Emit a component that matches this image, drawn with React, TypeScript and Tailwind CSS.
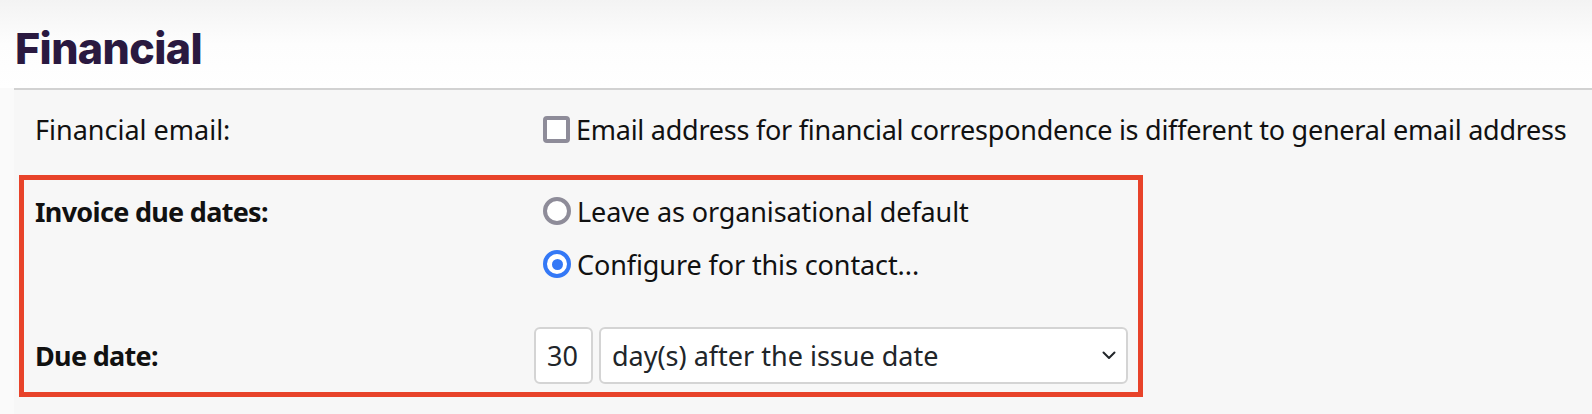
import React from "react";

const body = { fontFamily: '"Noto Sans", "Open Sans", sans-serif' };

function Radio({ checked }: { checked?: boolean }) {
  return checked ? (
    <span className="box-border flex h-[28px] w-[28px] shrink-0 items-center justify-center rounded-full border-[4px] border-[#3478f6] bg-white">
      <span className="h-[11px] w-[11px] rounded-full bg-[#3478f6]" />
    </span>
  ) : (
    <span className="box-border h-[28px] w-[28px] shrink-0 rounded-full border-[4px] border-[#8e8c99] bg-white" />
  );
}

export default function App() {
  return (
    <div className="min-h-[414px] w-[1592px] bg-[#fafafa] text-[#111111]" style={body}>
      <div className="flex h-[88px] items-start bg-gradient-to-b from-[#f3f3f3] via-[#fdfdfd] to-white pl-[15px] pt-[22px]">
        <h1
          className="text-[43px] font-extrabold leading-[52px] tracking-[-0.6px] text-[#2a1940]"
          style={{ fontFamily: 'Inter, Lato, "Noto Sans", sans-serif' }}
        >
          Financial
        </h1>
      </div>
      <div className="ml-[14px] min-h-[326px] border-t-2 border-[#d2d2d2] bg-[#f7f7f7] text-[27px] leading-none">
        <div className="flex h-[79px] items-center pl-[21px]">
          <div className="w-[508px]">Financial email:</div>
          <div className="flex items-center gap-[6px]">
            <span className="box-border h-[27px] w-[27px] rounded-[4px] border-[4px] border-[#8e8c99] bg-white" />
            <span className="tracking-[-0.25px]">
              Email address for financial correspondence is different to general email address
            </span>
          </div>
        </div>
        <div className="ml-[5px] mt-[6px] w-[1124px] border-[5px] border-[#e8432a] pb-[8px] pl-[11px] pt-[17px]">
          <div className="flex">
            <div className="flex h-[28px] w-[508px] items-center font-bold tracking-[-0.7px]">Invoice due dates:</div>
            <div className="flex flex-col gap-[25px]">
              <div className="flex h-[28px] items-center gap-[6px]">
                <Radio />
                <span className="tracking-[-0.1px]">Leave as organisational default</span>
              </div>
              <div className="flex h-[28px] items-center gap-[6px]">
                <Radio checked />
                <span className="tracking-[-0.1px]">Configure for this contact...</span>
              </div>
            </div>
          </div>
          <div className="mt-[49px] flex h-[57px] items-center">
            <div className="w-[499px] font-bold tracking-[-0.7px]">Due date:</div>
            <div className="flex h-[57px] items-stretch gap-[6px] text-[#212529]">
              <div className="box-border flex w-[59px] items-center rounded-[6px] border-2 border-[#d4d4d4] bg-white pl-[11px]">
                30
              </div>
              <div className="box-border flex w-[529px] items-center justify-between rounded-[6px] border-2 border-[#d4d4d4] bg-white pl-[11px] pr-[10px]">
                <span>day(s) after the issue date</span>
                <svg width="14" height="9" viewBox="0 0 14 9" fill="none">
                  <path
                    d="M1.5 1.5 L7 7 L12.5 1.5"
                    stroke="#212529"
                    strokeWidth="2"
                    strokeLinecap="round"
                    strokeLinejoin="round"
                  />
                </svg>
              </div>
            </div>
          </div>
        </div>
      </div>
    </div>
  );
}
